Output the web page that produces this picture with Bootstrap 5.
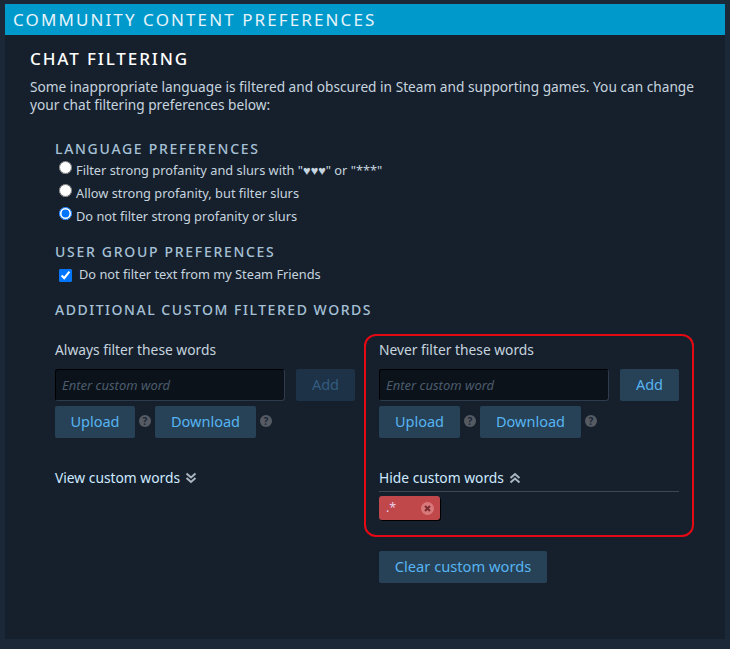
<!DOCTYPE html>
<html lang="en">
<head>
    <meta charset="UTF-8">
    <title>Community Content Preferences</title>
    <link href="https://cdn.jsdelivr.net/npm/bootstrap@5.3.0/dist/css/bootstrap.min.css" rel="stylesheet">
    <style>
        html, body { height: 649px; overflow: hidden; }
        body { background: #1b2838; font-family: "Noto Sans", sans-serif; color: #c6d4df; font-size: 14px; padding: 4px 5px 10px; }
        .prefs-panel { background: #16202d; height: 635px; }
        .prefs-head { background: #0099cc; color: #e8f4fa; height: 31px; font-size: 17px; line-height: 31px; letter-spacing: 2.1px; padding-left: 8px; }
        .prefs-body { padding: 12px 25px 0; }
        .chat-title { color: #fff; font-size: 17px; line-height: 24px; letter-spacing: 1.9px; font-weight: 500; margin: 0 0 7px; }
        .intro-text { font-size: 13.7px; line-height: 18px; margin: 0 0 25px; width: 680px; }
        .prefs-inner { padding-left: 25px; }
        .sub-title { color: #a6c1d6; font-size: 14px; line-height: 20px; letter-spacing: 1.7px; font-weight: 500; margin: 0; }
        .user-head { margin-top: 14px; }
        .word-head { margin-top: 14px; letter-spacing: 1.53px; }
        .opt-row { font-size: 12.8px; line-height: 23px; height: 23px; color: #c6d4df; }
        .check-row { margin-top: 1px; }
        .opt-row input[type=radio] { width: 13px; height: 13px; margin: 0 4px 0 4px; position: relative; top: -4px; vertical-align: middle; }
        .opt-row input[type=checkbox] { width: 13px; height: 13px; margin: 0 7px 0 4px; vertical-align: middle; }
        .word-cols { display: flex; gap: 24px; margin-top: 20px; }
        .word-col { width: 300px; flex: none; }
        .word-col-red { width: 330px; border: 2px solid #e50914; border-radius: 12px; padding: 4px 13px 12px; margin: -6px 0 0 -15px; height: 203px; flex: none; }
        .word-label { font-size: 13.8px; line-height: 20px; margin-bottom: 9px; }
        .word-input { width: 230px; height: 32px; background: #0b121a; border: 1px solid #000; border-right-color: #2e3b4d; border-bottom-color: #2e3b4d; border-radius: 3px; color: #c6d4df; font-size: 13px; font-style: italic; padding: 0 6px; outline: none; }
        .word-input::placeholder { color: #4b5c6d; opacity: 1; }
        .steam-btn { background: #274256; color: #57b4f2; border: 0; border-radius: 2px; height: 32px; font-size: 14.5px; line-height: 30px; padding: 0 0 2px; }
        .steam-btn:hover { background: #274256; color: #57b4f2; }
        .btn-dim:disabled { background: #1d3247; color: #335c7e; opacity: 1; width: 59px; margin-left: 11px; }
        .btn-add { width: 59px; margin-left: 11px; }
        .btn-up { width: 80px; }
        .word-col-red .btn-up { width: 81px; }
        .btn-down { width: 101px; }
        .help-dot { width: 12px; height: 12px; border-radius: 50%; background: #565a62; color: #1b2838; font-size: 10px; line-height: 12px; font-weight: 700; text-align: center; margin: 0 4px; position: relative; top: -1px; flex: none; }
        .row-gap { margin-top: 5px; }
        .toggle-words { color: #cfeaff; font-size: 13.8px; line-height: 20px; margin-top: 30px; }
        .toggle-words svg { margin-left: 1px; position: relative; top: -1px; }
        .words-rule { border-top: 1px solid #3c4654; margin: 3px 0 4px; }
        .word-tag { width: 61px; height: 24px; background: #c0474a; border-radius: 3px; box-shadow: 1px 1px 0 #000; color: #e8d0ea; font-size: 12.5px; line-height: 20px; padding: 0 6px 0 7px; }
        .tag-x { width: 13px; height: 13px; flex: none; }
        .clear-wrap { margin-left: 324px; margin-top: 14px; }
        .btn-clear { width: 168px; font-size: 14.7px; }
    </style>
</head>
<body>
<div class="prefs-panel">
    <div class="prefs-head">COMMUNITY CONTENT PREFERENCES</div>
    <div class="prefs-body">
        <h2 class="chat-title">CHAT FILTERING</h2>
        <p class="intro-text">Some inappropriate language is filtered and obscured in Steam and supporting games. You can change your chat filtering preferences below:</p>
        <div class="prefs-inner">
            <h3 class="sub-title">LANGUAGE PREFERENCES</h3>
            <div class="opt-row"><input type="radio" name="lang">Filter strong profanity and slurs with "♥♥♥" or "***"</div>
            <div class="opt-row"><input type="radio" name="lang">Allow strong profanity, but filter slurs</div>
            <div class="opt-row"><input type="radio" name="lang" checked>Do not filter strong profanity or slurs</div>
            <h3 class="sub-title user-head">USER GROUP PREFERENCES</h3>
            <div class="opt-row check-row"><input type="checkbox" checked>Do not filter text from my Steam Friends</div>
            <h3 class="sub-title word-head">ADDITIONAL CUSTOM FILTERED WORDS</h3>
            <div class="word-cols">
                <div class="word-col">
                    <div class="word-label">Always filter these words</div>
                    <div class="d-flex">
                        <input class="word-input" type="text" placeholder="Enter custom word">
                        <button class="btn steam-btn btn-dim" type="button" disabled>Add</button>
                    </div>
                    <div class="d-flex align-items-center row-gap">
                        <button class="btn steam-btn btn-up" type="button">Upload</button>
                        <span class="help-dot">?</span>
                        <button class="btn steam-btn btn-down" type="button">Download</button>
                        <span class="help-dot">?</span>
                    </div>
                    <div class="toggle-words">View custom words
                        <svg width="12" height="12" viewBox="0 0 12 12" fill="none" stroke="#a9b6c2" stroke-width="2"><path d="M1.500 1.500 6 5.500l4.500-4M1.500 6 6 10l4.500-4"/></svg>
                    </div>
                </div>
                <div class="word-col-red">
                    <div class="word-label">Never filter these words</div>
                    <div class="d-flex">
                        <input class="word-input" type="text" placeholder="Enter custom word">
                        <button class="btn steam-btn btn-add" type="button">Add</button>
                    </div>
                    <div class="d-flex align-items-center row-gap">
                        <button class="btn steam-btn btn-up" type="button">Upload</button>
                        <span class="help-dot">?</span>
                        <button class="btn steam-btn btn-down" type="button">Download</button>
                        <span class="help-dot">?</span>
                    </div>
                    <div class="toggle-words">Hide custom words
                        <svg width="12" height="12" viewBox="0 0 12 12" fill="none" stroke="#a9b6c2" stroke-width="2"><path d="M1.500 6 6 2l4.500 4M1.500 10.500 6 6.500l4.500 4"/></svg>
                    </div>
                    <div class="words-rule"></div>
                    <div class="word-tag d-flex align-items-center justify-content-between">
                        <span>.*</span>
                        <svg class="tag-x" viewBox="0 0 13 13"><circle cx="6.500" cy="6.500" r="6.500" fill="#d9787a"/><path d="M4 4l5 5M9 4l-5 5" stroke="#7c2b2e" stroke-width="2"/></svg>
                    </div>
                </div>
            </div>
            <div class="clear-wrap"><button class="btn steam-btn btn-clear" type="button">Clear custom words</button></div>
        </div>
    </div>
</div>
<script src="https://cdn.jsdelivr.net/npm/bootstrap@5.3.0/dist/js/bootstrap.bundle.min.js"></script>
</body>
</html>
